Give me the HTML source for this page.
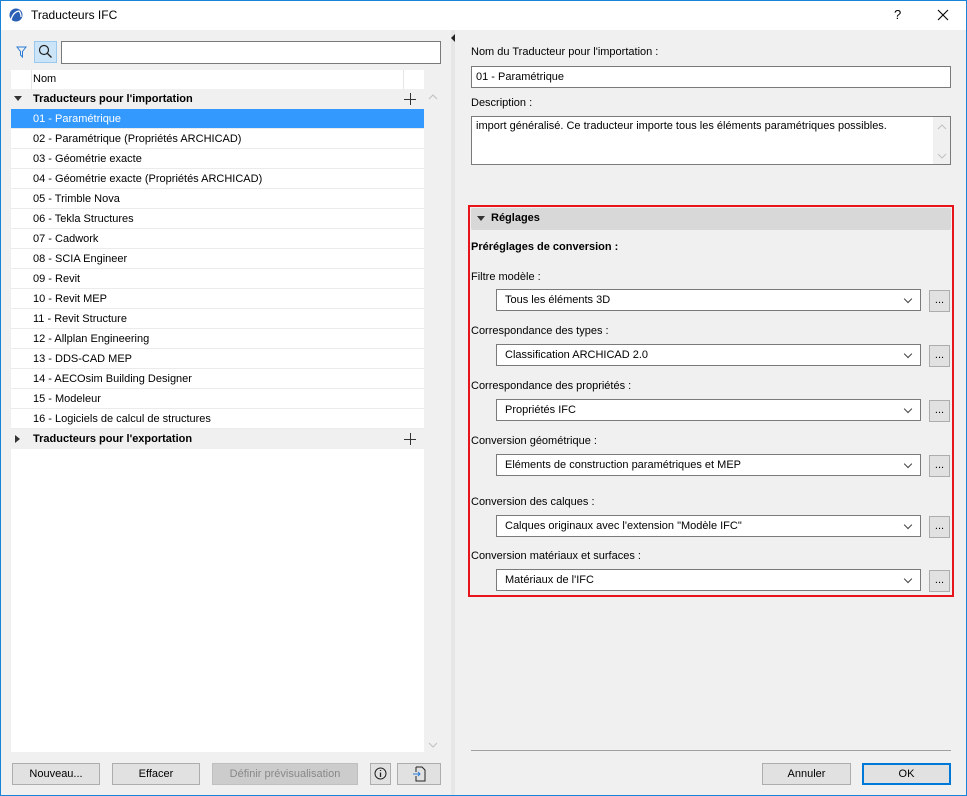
<!DOCTYPE html>
<html><head><meta charset="utf-8"><style>
*{box-sizing:border-box;margin:0;padding:0}
body{width:967px;height:796px;overflow:hidden;font-family:"Liberation Sans",sans-serif;font-size:11px;color:#000;background:#f0f0f0;position:relative}
.abs{position:absolute}
.frame{left:0;top:0;width:967px;height:796px;border:1px solid #1883d7;z-index:10;pointer-events:none}
.title{left:0;top:0;width:967px;height:30px;background:#fff}
.row{position:absolute;left:11px;width:413px;height:20px;line-height:20px;padding-left:22px;border-bottom:1px solid #ebebeb;background:#fff;white-space:nowrap}
.grp{background:#f0f0f0;font-weight:bold;border-bottom:none}
.sel{background:#3399ff;color:#fff}
.btn{position:absolute;height:22px;border:1px solid #adadad;background:#e1e1e1;text-align:center;line-height:20px}
.inp{position:absolute;background:#fff;border:1px solid #7a7a7a;height:22px;line-height:20px;padding-left:4px;white-space:nowrap}
.lbl{position:absolute;left:471px;white-space:nowrap}
.dd{position:absolute;left:496px;width:425px;height:22px;background:#fff;border:1px solid #7a7a7a;line-height:20px;padding-left:8px}
.dd:after{content:"";position:absolute;right:9px;top:6px;width:5px;height:5px;border-right:1px solid #444;border-bottom:1px solid #444;transform:rotate(45deg)}
.dots{position:absolute;left:929px;width:21px;height:22px;border:1px solid #adadad;background:#e1e1e1;text-align:center;line-height:18px}
.plus{position:absolute;left:404px;width:12px;height:12px}
.plus:before{content:"";position:absolute;left:0;top:5.5px;width:12px;height:1px;background:#333}
.plus:after{content:"";position:absolute;left:5.5px;top:0;width:1px;height:12px;background:#333}
</style></head><body>
<div class="abs frame"></div>
<div class="abs title">
<svg class="abs" style="left:9px;top:8px" width="14" height="14" viewBox="0 0 14 14"><circle cx="7" cy="7" r="6.5" fill="#2a5fb5"/><path d="M2 12 Q4 4 10 3 Q12 5 12 9" stroke="#fff" stroke-width="1.3" fill="none"/></svg>
<div class="abs" style="left:31px;top:8px;font-size:12px">Traducteurs IFC</div>
<div class="abs" style="left:894px;top:7px;font-size:13px">?</div>
<svg class="abs" style="left:937px;top:9px" width="12" height="12"><path d="M1 1L11 11M11 1L1 11" stroke="#000" stroke-width="1.1"/></svg>
</div>
<svg class="abs" style="left:16px;top:46px" width="11" height="12"><path d="M1 1H10L6.5 5.5V11L4.5 9V5.5Z" fill="none" stroke="#2a7ad5" stroke-width="1"/></svg>
<div class="abs" style="left:34px;top:41px;width:23px;height:22px;background:#cce4f7;border:1px solid #99c9ef"></div>
<svg class="abs" style="left:38px;top:44px" width="15" height="15"><circle cx="6" cy="6" r="4.5" fill="none" stroke="#222" stroke-width="1.2"/><path d="M9.5 9.5L13.5 13.5" stroke="#222" stroke-width="1.3"/></svg>
<div class="abs" style="left:61px;top:41px;width:380px;height:23px;background:#fff;border:1px solid #7a7a7a"></div>
<div class="abs" style="left:11px;top:70px;width:413px;height:682px;background:#fff"></div>
<div class="abs" style="left:31px;top:70px;width:1px;height:19px;background:#e5e5e5"></div>
<div class="abs" style="left:403px;top:70px;width:1px;height:19px;background:#e5e5e5"></div>
<div class="abs" style="left:33px;top:73px">Nom</div>
<div class="row grp" style="top:89px">Traducteurs pour l'importation</div>
<div class="abs" style="left:14px;top:96px;width:0;height:0;border-left:4px solid transparent;border-right:4px solid transparent;border-top:5px solid #333"></div>
<div class="plus" style="top:93px"></div>
<div class="row sel" style="top:109px">01 - Paramétrique</div>
<div class="row" style="top:129px">02 - Paramétrique (Propriétés ARCHICAD)</div>
<div class="row" style="top:149px">03 - Géométrie exacte</div>
<div class="row" style="top:169px">04 - Géométrie exacte (Propriétés ARCHICAD)</div>
<div class="row" style="top:189px">05 - Trimble Nova</div>
<div class="row" style="top:209px">06 - Tekla Structures</div>
<div class="row" style="top:229px">07 - Cadwork</div>
<div class="row" style="top:249px">08 - SCIA Engineer</div>
<div class="row" style="top:269px">09 - Revit</div>
<div class="row" style="top:289px">10 - Revit MEP</div>
<div class="row" style="top:309px">11 - Revit Structure</div>
<div class="row" style="top:329px">12 - Allplan Engineering</div>
<div class="row" style="top:349px">13 - DDS-CAD MEP</div>
<div class="row" style="top:369px">14 - AECOsim Building Designer</div>
<div class="row" style="top:389px">15 - Modeleur</div>
<div class="row" style="top:409px">16 - Logiciels de calcul de structures</div>
<div class="row grp" style="top:429px">Traducteurs pour l'exportation</div>
<div class="abs" style="left:15px;top:435px;width:0;height:0;border-top:4px solid transparent;border-bottom:4px solid transparent;border-left:5px solid #333"></div>
<div class="plus" style="top:433px"></div>
<svg class="abs" style="left:428px;top:94px" width="10" height="6"><path d="M1 5L5 1L9 5" fill="none" stroke="#c0c0c0"/></svg>
<svg class="abs" style="left:428px;top:742px" width="10" height="6"><path d="M1 1L5 5L9 1" fill="none" stroke="#c0c0c0"/></svg>
<div class="abs" style="left:451px;top:30px;width:4px;height:765px;background:#e6e6e6"></div>
<div class="abs" style="left:451px;top:34px;width:0;height:0;border-top:4px solid transparent;border-bottom:4px solid transparent;border-right:4px solid #222"></div>
<div class="btn" style="left:12px;top:763px;width:88px">Nouveau...</div>
<div class="btn" style="left:112px;top:763px;width:88px">Effacer</div>
<div class="btn" style="left:212px;top:763px;width:146px;color:#888;background:#ccc;border-color:#bfbfbf">Définir prévisualisation</div>
<div class="btn" style="left:370px;top:763px;width:21px"><svg style="margin-top:3px" width="13" height="13"><circle cx="6.5" cy="6.5" r="5.5" fill="none" stroke="#222"/><path d="M6.5 5.5V10M6.5 3V4" stroke="#222" stroke-width="1.3"/></svg></div>
<div class="btn" style="left:397px;top:763px;width:44px"><svg style="margin-top:2px" width="14" height="16"><path d="M4 1H10L13 4V15H4V10M4 6V1" fill="none" stroke="#222"/><path d="M1 8H8M6 6L8 8L6 10" fill="none" stroke="#2a7ad5"/></svg></div>
<div class="lbl" style="top:46px">Nom du Traducteur pour l'importation :</div>
<div class="inp" style="left:471px;top:66px;width:480px">01 - Paramétrique</div>
<div class="lbl" style="top:97px">Description :</div>
<div class="inp" style="left:471px;top:116px;width:480px;height:49px;line-height:18px">import généralisé. Ce traducteur importe tous les éléments paramétriques possibles.</div>
<div class="abs" style="left:933px;top:117px;width:17px;height:47px;background:#f0f0f0"></div>
<svg class="abs" style="left:937px;top:124px" width="10" height="6"><path d="M1 5L5 1L9 5" fill="none" stroke="#c0c0c0"/></svg>
<svg class="abs" style="left:937px;top:153px" width="10" height="6"><path d="M1 1L5 5L9 1" fill="none" stroke="#c0c0c0"/></svg>
<div class="abs" style="left:468px;top:205px;width:486px;height:392px;border:2px solid #e8141b"></div>
<div class="abs" style="left:471px;top:208px;width:480px;height:22px;background:#d8d8d8;border-radius:2px"></div>
<div class="abs" style="left:477px;top:216px;width:0;height:0;border-left:4px solid transparent;border-right:4px solid transparent;border-top:5px solid #333"></div>
<div class="abs" style="left:491px;top:212px;font-weight:bold">Réglages</div>
<div class="lbl" style="top:241px;font-weight:bold">Préréglages de conversion :</div>
<div class="lbl" style="top:271px">Filtre modèle :</div>
<div class="dd" style="top:289px">Tous les éléments 3D</div><div class="dots" style="top:290px">...</div>
<div class="lbl" style="top:325px">Correspondance des types :</div>
<div class="dd" style="top:344px">Classification ARCHICAD 2.0</div><div class="dots" style="top:345px">...</div>
<div class="lbl" style="top:380px">Correspondance des propriétés :</div>
<div class="dd" style="top:399px">Propriétés IFC</div><div class="dots" style="top:400px">...</div>
<div class="lbl" style="top:435px">Conversion géométrique :</div>
<div class="dd" style="top:454px">Eléments de construction paramétriques et MEP</div><div class="dots" style="top:455px">...</div>
<div class="lbl" style="top:496px">Conversion des calques :</div>
<div class="dd" style="top:515px">Calques originaux avec l'extension "Modèle IFC"</div><div class="dots" style="top:516px">...</div>
<div class="lbl" style="top:550px">Conversion matériaux et surfaces :</div>
<div class="dd" style="top:569px">Matériaux de l'IFC</div><div class="dots" style="top:570px">...</div>
<div class="abs" style="left:471px;top:750px;width:480px;height:1px;background:#a0a0a0"></div>
<div class="btn" style="left:762px;top:763px;width:89px">Annuler</div>
<div class="btn" style="left:862px;top:763px;width:89px;border:2px solid #0078d7;line-height:18px">OK</div>
</body></html>
